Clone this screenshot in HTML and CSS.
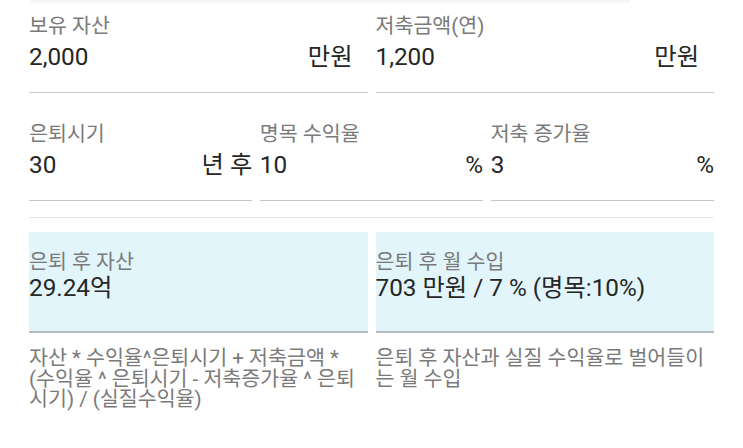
FILE: index.html
```html
<!DOCTYPE html>
<html lang="ko">
<head>
<meta charset="utf-8">
<link rel="stylesheet" href="styles.css">
</head>
<body>
<div class="card-edge"></div>
<div class="page">
  <div class="row">
    <div class="field">
      <div class="label">보유 자산</div>
      <div class="value-row"><span>2,000</span><span class="suffix wide">만원</span></div>
    </div>
    <div class="field">
      <div class="label">저축금액(연)</div>
      <div class="value-row"><span>1,200</span><span class="suffix wide">만원</span></div>
    </div>
  </div>
  <div class="row row-2">
    <div class="field">
      <div class="label">은퇴시기</div>
      <div class="value-row"><span>30</span><span class="suffix">년 후</span></div>
    </div>
    <div class="field">
      <div class="label">명목 수익율</div>
      <div class="value-row"><span>10</span><span class="suffix">%</span></div>
    </div>
    <div class="field">
      <div class="label">저축 증가율</div>
      <div class="value-row"><span>3</span><span class="suffix">%</span></div>
    </div>
  </div>
  <div class="divider"></div>
  <div class="row">
    <div class="result">
      <div class="label">은퇴 후 자산</div>
      <div class="result-value">29.24억</div>
    </div>
    <div class="result">
      <div class="label">은퇴 후 월 수입</div>
      <div class="result-value">703 만원 / 7 % (명목:10%)</div>
    </div>
  </div>
  <div class="row desc-row">
    <div class="desc">자산 * 수익율^은퇴시기 + 저축금액 *<br>(수익율 ^ 은퇴시기 - 저축증가율 ^ 은퇴<br>시기) / (실질수익율)</div>
    <div class="desc">은퇴 후 자산과 실질 수익율로 벌어들이<br>는 월 수입</div>
  </div>
</div>
</body>
</html>
```

FILE: styles.css
```css
html, body {
  margin: 0;
  padding: 0;
  background: #ffffff;
}
body {
  font-family: Roboto, "Noto Sans CJK KR", sans-serif;
  width: 743px;
  height: 448px;
  overflow: hidden;
}
.card-edge {
  height: 5px;
  width: 600px;
  margin-left: 30px;
  background: linear-gradient(to bottom, rgba(0,0,0,0.045), rgba(0,0,0,0));
}
.page {
  padding: 10px 29px 0 29px;
}
.row {
  display: flex;
  gap: 8px;
}
.field {
  flex: 1 1 0;
  min-width: 0;
  display: flex;
  flex-direction: column;
  border-bottom: 1px solid #c6c6c6;
  padding-bottom: 20px;
}
.row-2 {
  margin-top: 30px;
  gap: 7.5px;
}
.label {
  font-size: 20.6px;
  line-height: 22px;
  color: #7a7a7a;
  white-space: nowrap;
}
.value-row {
  display: flex;
  justify-content: space-between;
  font-size: 24.3px;
  line-height: 30px;
  color: #262626;
  margin-top: 5px;
  white-space: nowrap;
}
.suffix.wide {
  padding-right: 15px;
}
.divider {
  height: 1px;
  background: #e4e4e4;
  margin-top: 16px;
}
.result {
  flex: 1 1 0;
  min-width: 0;
  background: #e1f5fa;
  border-bottom: 2px solid #b3bdc1;
  padding: 19px 0 28px 0;
  margin-top: 14px;
}
.result-value {
  font-size: 24.3px;
  line-height: 30px;
  color: #262626;
  white-space: nowrap;
}
.desc-row {
  margin-top: 15px;
}
.desc {
  flex: 1 1 0;
  min-width: 0;
  font-size: 20.6px;
  line-height: 20.5px;
  color: #7a7a7a;
  white-space: nowrap;
}
```
